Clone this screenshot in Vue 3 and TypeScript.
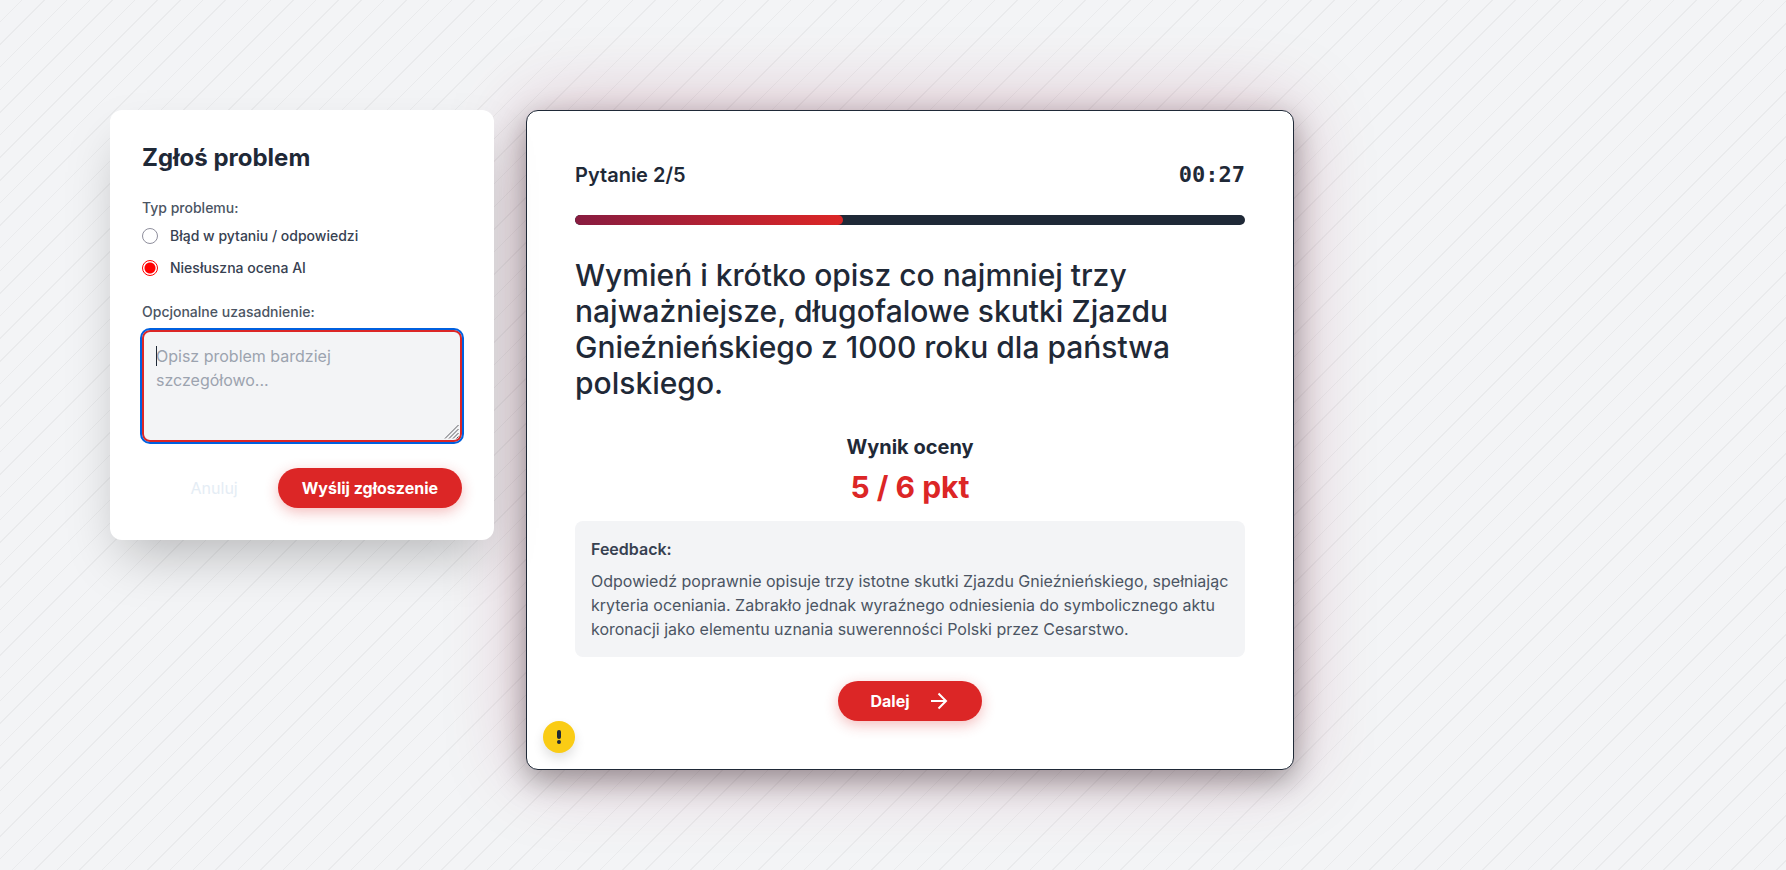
<script setup lang="ts">
import { computed, onMounted, ref } from 'vue'

const problemTypes = [
  { id: 'content', label: 'Błąd w pytaniu / odpowiedzi' },
  { id: 'ai', label: 'Niesłuszna ocena AI' },
]
const selected = ref('ai')
const reason = ref('')
const reasonField = ref<HTMLTextAreaElement | null>(null)

const current = 2
const total = 5
const progress = computed(() => `${(current / total) * 100}%`)

onMounted(() => reasonField.value?.focus())
</script>

<template>
  <main class="page">
    <form class="report" @submit.prevent>
      <h2 class="report-title">Zgłoś problem</h2>
      <fieldset class="types">
        <legend class="caption">Typ problemu:</legend>
        <label v-for="t in problemTypes" :key="t.id" class="option">
          <input v-model="selected" class="radio" type="radio" name="problem" :value="t.id" />
          <span>{{ t.label }}</span>
        </label>
      </fieldset>
      <label class="caption" for="reason">Opcjonalne uzasadnienie:</label>
      <div class="field">
        <textarea
          id="reason"
          ref="reasonField"
          v-model="reason"
          class="reason"
          placeholder="Opisz problem bardziej szczegółowo..."
        ></textarea>
        <span v-if="!reason" class="caret" aria-hidden="true"></span>
        <svg class="grip" viewBox="0 0 15 15" aria-hidden="true">
          <path d="M1 14.5 14.5 1M5 14.5 14.5 5M9 14.5 14.5 9M12.5 14.5l2-2" />
        </svg>
      </div>
      <div class="actions">
        <button type="button" class="btn cancel">Anuluj</button>
        <button type="submit" class="btn primary">Wyślij zgłoszenie</button>
      </div>
    </form>

    <section class="quiz">
      <header class="quiz-head">
        <span class="counter">Pytanie {{ current }}/{{ total }}</span>
        <span class="timer">00:27</span>
      </header>
      <div class="track">
        <div class="fill" :style="{ width: progress }"></div>
      </div>
      <h1 class="question">
        Wymień i krótko opisz co najmniej trzy najważniejsze, długofalowe skutki Zjazdu
        Gnieźnieńskiego z 1000 roku dla państwa polskiego.
      </h1>
      <div class="result">
        <h3 class="result-title">Wynik oceny</h3>
        <p class="score">5 / 6 pkt</p>
      </div>
      <div class="feedback">
        <h4 class="feedback-title">Feedback:</h4>
        <p class="feedback-text">
          Odpowiedź poprawnie opisuje trzy istotne skutki Zjazdu Gnieźnieńskiego, spełniając
          kryteria oceniania. Zabrakło jednak wyraźnego odniesienia do symbolicznego aktu
          koronacji jako elementu uznania suwerenności Polski przez Cesarstwo.
        </p>
      </div>
      <button type="button" class="btn primary next">
        Dalej
        <svg class="arrow" viewBox="0 0 24 24" aria-hidden="true">
          <path d="M5 12h15M12.500 4.500 20 12l-7.500 7.500" />
        </svg>
      </button>
      <button type="button" class="alert" aria-label="Zgłoś problem">
        <svg class="mark" viewBox="0 0 16 16" aria-hidden="true">
          <path d="M8 3v5" stroke-width="4" />
          <circle cx="8" cy="13" r="2" />
        </svg>
      </button>
    </section>
  </main>
</template>

<style>
body {
  background: #f3f4f6;
}
</style>

<style scoped>
* {
  box-sizing: border-box;
  margin: 0;
}

.page {
  display: grid;
  grid-template-columns: 384px minmax(0, 768px);
  align-items: start;
  gap: 32px;
  min-height: 100vh;
  padding: 110px 110px 100px;
  color: #1f2937;
  font-family: Inter, sans-serif;
  font-size: 16px;
  line-height: 24px;
  background-color: #f3f4f6;
  background-image: repeating-linear-gradient(
    135deg,
    transparent,
    transparent 15px,
    rgba(0, 0, 0, 0.04) 15px,
    rgba(0, 0, 0, 0.04) 16px
  );
}

.report {
  position: relative;
  z-index: 1;
  padding: 32px;
  border-radius: 12px;
  background: #fff;
  box-shadow: 0 25px 50px -12px rgba(0, 0, 0, 0.25);
}

.report-title {
  margin-bottom: 24px;
  font-size: 24px;
  font-weight: 700;
  line-height: 32px;
}

.types {
  display: flex;
  flex-direction: column;
  gap: 12px;
  margin-bottom: 24px;
  padding: 0;
  border: 0;
}

.caption {
  display: block;
  color: #4b5563;
  font-size: 14px;
  font-weight: 500;
  line-height: 20px;
}

legend.caption {
  margin-bottom: 8px;
  padding: 0;
}

.option {
  display: flex;
  align-items: center;
  gap: 12px;
  color: #374151;
  font-size: 14px;
  font-weight: 500;
  line-height: 20px;
}

.radio {
  width: 16px;
  height: 16px;
  border: 1px solid #8f8f9d;
  border-radius: 50%;
  background: #fff;
  appearance: none;
}

.radio:checked {
  border-color: #f00;
  background: radial-gradient(circle, #f00 0 5px, #fff 6px);
}

.field {
  position: relative;
  margin: 8px 0 26px;
}

.reason {
  display: block;
  width: 100%;
  height: 112px;
  padding: 12px 28px 12px 12px;
  border: 2px solid #dc2626;
  border-radius: 8px;
  color: #1f2937;
  font: inherit;
  background: #f3f4f6;
  outline: 2px solid #0060df;
  resize: none;
}

.reason::placeholder {
  color: #9ca3af;
}

.reason:placeholder-shown {
  caret-color: transparent;
}

.caret {
  position: absolute;
  top: 16px;
  left: 14px;
  width: 1px;
  height: 20px;
  background: #1f2937;
  pointer-events: none;
}

.grip {
  position: absolute;
  right: 3px;
  bottom: 3px;
  width: 15px;
  height: 15px;
  fill: none;
  stroke: #5b5b60;
  pointer-events: none;
}

.actions {
  display: flex;
  justify-content: flex-end;
  gap: 16px;
}

.btn {
  padding: 8px 24px;
  border: 0;
  border-radius: 20px;
  font: inherit;
  cursor: pointer;
}

.cancel {
  color: #e5edf5;
  background: none;
}

.primary {
  color: #fff;
  font-weight: 700;
  background: #dc2626;
  box-shadow: 0 4px 14px rgba(220, 38, 38, 0.3);
}

.quiz {
  position: relative;
  display: flex;
  flex-direction: column;
  padding: 48px;
  border: 1px solid #1f2937;
  border-radius: 12px;
  background: #fff;
  box-shadow:
    0 10px 30px rgba(0, 0, 0, 0.35),
    0 0 80px rgba(136, 19, 55, 0.27);
}

.quiz-head {
  display: flex;
  align-items: center;
  justify-content: space-between;
  margin-bottom: 24px;
  line-height: 32px;
}

.counter {
  font-size: 20px;
  font-weight: 600;
}

.timer {
  font-family: 'DejaVu Sans Mono', monospace;
  font-size: 22px;
  font-weight: 700;
}

.track {
  height: 10px;
  margin-bottom: 32px;
  overflow: hidden;
  border-radius: 5px;
  background: #1f2937;
}

.fill {
  height: 100%;
  border-radius: 5px;
  background: linear-gradient(90deg, #881c40, #dc2626);
}

.question {
  margin-bottom: 32px;
  font-size: 30px;
  font-weight: 500;
  line-height: 36px;
}

.result {
  margin-bottom: 16px;
  text-align: center;
}

.result-title {
  margin-bottom: 8px;
  font-size: 20px;
  font-weight: 700;
  line-height: 28px;
}

.score {
  color: #dc2626;
  font-size: 30px;
  font-weight: 700;
  line-height: 36px;
}

.feedback {
  margin-bottom: 24px;
  padding: 16px;
  border-radius: 8px;
  background: #f3f4f6;
}

.feedback-title {
  margin-bottom: 8px;
  color: #374151;
  font-size: 16px;
  font-weight: 600;
}

.feedback-text {
  color: #4b5563;
}

.next {
  display: flex;
  align-items: center;
  align-self: center;
  gap: 16px;
  padding: 8px 32px;
}

.arrow {
  width: 24px;
  height: 24px;
  fill: none;
  stroke: #fff;
  stroke-width: 2;
}

.alert {
  position: absolute;
  bottom: 16px;
  left: 16px;
  display: grid;
  place-items: center;
  width: 32px;
  height: 32px;
  padding: 0;
  border: 0;
  border-radius: 50%;
  background: #facc15;
  box-shadow: 0 6px 12px rgba(0, 0, 0, 0.12);
  cursor: pointer;
}

.mark {
  width: 16px;
  height: 16px;
  fill: #1f2937;
  stroke-linecap: round;
}

.mark path {
  stroke: #1f2937;
}
</style>
